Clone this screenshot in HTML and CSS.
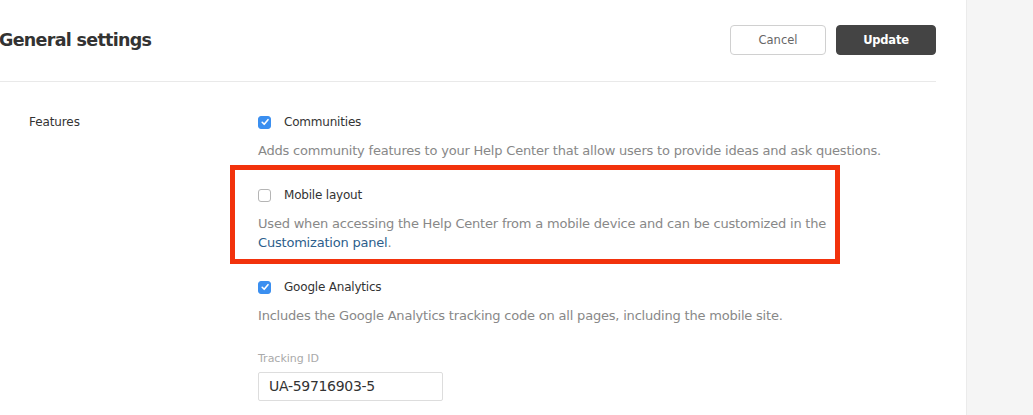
FILE: index.html
```html
<!DOCTYPE html>
<html lang="en">
<head>
    <meta charset="UTF-8">
    <title>General settings</title>
    <link rel="stylesheet" href="styles.css">
</head>
<body>
    <div class="page">
        <div class="main">
            <div class="header">
                <h1>General settings</h1>
                <div class="actions">
                    <button class="btn">Cancel</button>
                    <button class="btn btn-primary">Update</button>
                </div>
            </div>
            <div class="section">
                <div class="section-label">Features</div>
                <div class="options">
                    <div class="option">
                        <label class="check-row">
                            <span class="box checked">
                                <svg viewBox="0 0 12 12" width="12" height="12"><path d="M3.2 6.3l2 2 3.8-4.6" fill="none" stroke="#fff" stroke-width="1.6" stroke-linecap="round" stroke-linejoin="round"/></svg>
                            </span>
                            Communities
                        </label>
                        <p class="desc">Adds community features to your Help Center that allow users to provide ideas and ask questions.</p>
                    </div>
                    <div class="option highlight">
                        <label class="check-row">
                            <span class="box"></span>
                            Mobile layout
                        </label>
                        <p class="desc">Used when accessing the Help Center from a mobile device and can be customized in the <a href="#">Customization panel</a>.</p>
                    </div>
                    <div class="option ga">
                        <label class="check-row">
                            <span class="box checked">
                                <svg viewBox="0 0 12 12" width="12" height="12"><path d="M3.2 6.3l2 2 3.8-4.6" fill="none" stroke="#fff" stroke-width="1.6" stroke-linecap="round" stroke-linejoin="round"/></svg>
                            </span>
                            Google Analytics
                        </label>
                        <p class="desc">Includes the Google Analytics tracking code on all pages, including the mobile site.</p>
                        <div class="field">
                            <div class="field-label">Tracking ID</div>
                            <div class="input">UA-59716903-5</div>
                        </div>
                    </div>
                </div>
            </div>
        </div>
        <div class="sidebar"></div>
    </div>
</body>
</html>
```

FILE: styles.css
```css
body {
    margin: 0;
    font-family: "DejaVu Sans", Verdana, sans-serif;
    font-size: 13px;
    color: #333;
    background: #fff;
    overflow: hidden;
}
.page {
    display: flex;
    height: 415px;
}
.main {
    width: 936px;
    padding-right: 30px;
}
.sidebar {
    flex: 1;
    background: #f5f5f5;
    border-left: 1px solid #ebebeb;
}
.header {
    display: flex;
    justify-content: space-between;
    align-items: center;
    height: 81px;
    border-bottom: 1px solid #e9e9e9;
}
h1 {
    margin: -2px 0 0 -1px;
    font-size: 17.5px;
    font-weight: bold;
    color: #333;
    letter-spacing: -0.7px;
}
.actions {
    display: flex;
    gap: 10px;
    margin-top: -1px;
}
.btn {
    width: 96px;
    height: 30px;
    border: 1px solid #d0d0d0;
    border-radius: 4px;
    background: #fff;
    color: #666;
    font-family: inherit;
    font-size: 11.5px;
}
.btn-primary {
    width: 100px;
    background: #444;
    border-color: #444;
    color: #fff;
    font-weight: bold;
    letter-spacing: -0.2px;
}
.section {
    display: flex;
    padding-top: 30px;
}
.section-label {
    width: 229px;
    padding-left: 29px;
    line-height: 20px;
    font-size: 12px;
    letter-spacing: -0.1px;
}
.option {
    width: 640px;
}
.check-row {
    display: flex;
    align-items: center;
    gap: 13px;
    line-height: 20px;
    font-size: 12px;
    letter-spacing: -0.2px;
}
.box {
    width: 11px;
    height: 11px;
    border: 1px solid #b5b5b5;
    border-radius: 3px;
    background: #fff;
    display: flex;
}
.box.checked {
    background: #3b8ff0;
    border-color: #3b8ff0;
}
.box svg {
    margin: -0.5px;
}
.desc {
    margin: 9px 0 0;
    line-height: 19px;
    color: #888;
    letter-spacing: -0.2px;
}
.desc a {
    color: #2d5e8c;
    text-decoration: none;
}
.highlight {
    margin: 5px 0 0 -28px;
    width: 572px;
    padding: 15px 5px 7px 23px;
    border: 5px solid #f2320c;
}
.ga {
    margin-top: 13px;
}
.field {
    margin-top: 27px;
}
.field-label {
    font-size: 11px;
    line-height: 14px;
    color: #aaa;
}
.input {
    margin-top: 6px;
    width: 173px;
    height: 27px;
    line-height: 27px;
    padding-left: 10px;
    border: 1px solid #ddd;
    border-radius: 2px;
    font-size: 14px;
    letter-spacing: -0.3px;
    color: #333;
}
```
